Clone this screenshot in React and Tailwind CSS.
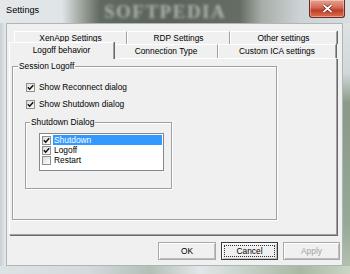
import React from "react";

const backTabs = [
  ["XenApp Settings", 113],
  ["RDP Settings", 103],
  ["Other settings", 107],
];

const frontTabs = [
  ["Logoff behavior", 105, true],
  ["Connection Type", 104],
  ["Custom ICA settings", 118],
];

const Box = ({ checked }) => (
  <span className="flex h-[9px] w-[9px] shrink-0 items-center justify-center border border-[#8e8f8f] bg-[linear-gradient(135deg,#dcdcdc,#ffffff)]">
    {checked && (
      <svg width="7" height="7" viewBox="0 0 7 7">
        <path d="M0.8 3.3 L2.7 5.2 L6.2 1.2" stroke="#111" strokeWidth="1.5" fill="none" />
      </svg>
    )}
  </span>
);

const Button = ({ children, focused, disabled, w }) => (
  <div
    className={`flex h-[18px] p-[2px] border ${focused ? "border-[#3c3c3c]" : "border-[#a9a9a9]"} bg-[#f0f0f0] shadow-[inset_1px_1px_0_#ffffff,inset_-1px_-1px_0_#bdbdbd] ${w}`}
  >
    <span
      className={`flex flex-1 items-center justify-center ${focused ? "border border-dotted border-[#333]" : ""} ${disabled ? "text-[#a3a3a3]" : "text-black"}`}
    >
      {children}
    </span>
  </div>
);

export default function App() {
  return (
    <div className="flex h-[274px] w-[350px] flex-col overflow-hidden bg-[#dfe4e7] font-['Liberation_Sans',Arial,sans-serif] text-[8.4px] leading-none text-black">
      {/* title bar */}
      <div className="relative flex h-[23px] shrink-0 items-start bg-[linear-gradient(90deg,#e4e8eb_0px,#dfe4e7_62px,#a3aaa2_80px,#616a5f_100px,#5a625b_170px,#666e64_240px,#a7aea8_262px,#cdd3d5_300px,#d8dde0_350px)]">
        <span className="pl-[6px] pt-[6px] text-[9.2px] text-black">Settings</span>
        <span className="absolute left-[104px] top-[2px] text-[19px] font-bold leading-none tracking-[1.5px] text-[#aeb4ab] blur-[1.4px] font-['Liberation_Serif',serif]">
          SOFTPEDIA
        </span>
        <div className="absolute right-[5px] top-0 flex h-[18px] w-[36px] items-center justify-center rounded-b-[3px] border border-t-0 border-[#6b2a22] bg-[linear-gradient(180deg,#e9a28f_0%,#d16a55_45%,#c23b28_60%,#d9714f_100%)] shadow-[inset_0_0_0_1px_rgba(255,255,255,0.35)]">
          <svg width="11" height="9" viewBox="0 0 11 9">
            <path d="M1.5 1 L9.5 8 M9.5 1 L1.5 8" stroke="#5a1f18" strokeWidth="3" />
            <path d="M1.5 1 L9.5 8 M9.5 1 L1.5 8" stroke="#ffffff" strokeWidth="1.7" />
          </svg>
        </div>
      </div>

      {/* window body */}
      <div className="flex flex-1">
        <div className="w-[6px] bg-[linear-gradient(90deg,#c9d0d4,#e6eaec)]" />
        <div className="flex h-[243px] w-[337px] flex-col border border-[#aeb6ba] bg-[#f0f0f0] pl-[2px] pt-[7px]">
          {/* back row tabs */}
          <div className="ml-[5px] flex h-[13px]">
            {backTabs.map(([label, w]) => (
              <div
                key={label}
                style={{ width: w }}
                className="flex items-center justify-center border-l border-r border-t border-l-white border-r-[#a0a0a0] border-t-white shadow-[1px_0_0_#696969]"
              >
                {label}
              </div>
            ))}
          </div>
          {/* front row tabs */}
          <div className="mt-[-2px] flex h-[16px] items-end">
            {frontTabs.map(([label, w, active]) => (
              <div
                key={label}
                style={{ width: w }}
                className={`flex items-center justify-center border-l border-r border-t border-l-white border-r-[#a0a0a0] border-t-white bg-[#f0f0f0] shadow-[1px_0_0_#696969] ${active ? "relative z-10 mb-[-1px] h-[17px] pb-[2px]" : "h-[14px]"}`}
              >
                {label}
              </div>
            ))}
          </div>

          {/* tab panel */}
          <div className="h-[177px] w-[328px] border border-b-[#a0a0a0] border-l-white border-r-[#a0a0a0] border-t-white pl-[2px] pt-[7px] shadow-[1px_1px_0_#696969]">
            <div className="relative h-[154px] w-[265px] border border-[#a0a0a0] shadow-[inset_1px_1px_0_#ffffff,1px_1px_0_#ffffff]">
              <span className="absolute left-[5px] top-[-5px] bg-[#f0f0f0] px-[1px]">Session Logoff</span>
              <div className="flex flex-col gap-[8px] pl-[13px] pt-[16px]">
                <div className="flex items-center gap-[4px]">
                  <Box checked />
                  <span>Show Reconnect dialog</span>
                </div>
                <div className="flex items-center gap-[4px]">
                  <Box checked />
                  <span>Show Shutdown dialog</span>
                </div>
              </div>
              <div className="relative ml-[12px] mt-[13px] h-[67px] w-[147px] border border-[#a0a0a0] shadow-[inset_1px_1px_0_#ffffff,1px_1px_0_#ffffff]">
                <span className="absolute left-[4px] top-[-5px] bg-[#f0f0f0] px-[1px]">Shutdown Dialog</span>
                <div className="ml-[13px] mt-[10px] flex h-[38px] w-[125px] flex-col border border-[#828790] bg-white pl-[2px] pr-[1px] pt-[1px]">
                  {[
                    ["Shutdown", true, true],
                    ["Logoff", true, false],
                    ["Restart", false, false],
                  ].map(([label, checked, sel]) => (
                    <div key={label} className="flex h-[10px] items-center gap-[2px]">
                      <Box checked={checked} />
                      <span
                        className={`flex h-[10px] flex-1 items-center pl-[1px] ${sel ? "bg-[#3399ff] text-white" : ""}`}
                      >
                        {label}
                      </span>
                    </div>
                  ))}
                </div>
              </div>
            </div>
          </div>

          {/* buttons */}
          <div className="mt-[7px] flex justify-end gap-[5px] pr-[2px]">
            <Button w="w-[58px]">OK</Button>
            <Button w="w-[57px]" focused>
              Cancel
            </Button>
            <Button w="w-[57px]" disabled>
              Apply
            </Button>
          </div>
        </div>
        <div className="w-[7px] bg-[linear-gradient(180deg,#dde2e4_0px,#d2d8da_50px,#8a9a87_80px,#97a895_200px,#b7c4b4_250px)]" />
      </div>
      <div className="h-[8px] shrink-0 bg-[linear-gradient(90deg,#dde2e5_0px,#d3d9dc_90px,#b5bfb6_150px,#e1e6e8_200px,#a9b8a3_300px,#c9d6c4_350px)]" />
    </div>
  );
}
